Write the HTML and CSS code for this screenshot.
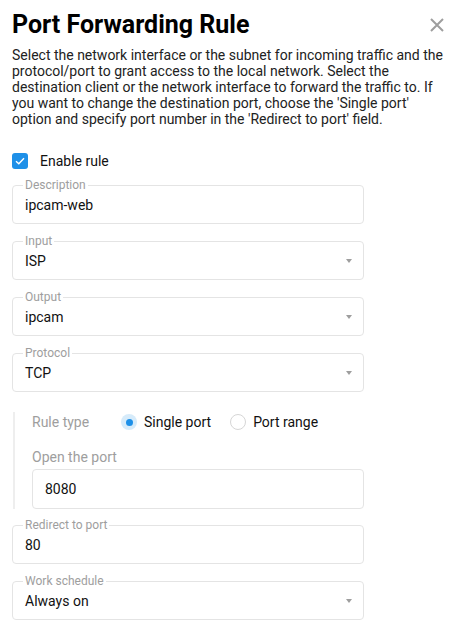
FILE: index.html
```html
<!DOCTYPE html>
<html>
<head>
<meta charset="utf-8">
<link rel="stylesheet" href="styles.css">
</head>
<body>
<div class="dialog">
  <header class="head">
    <h1 class="title">Port Forwarding Rule</h1>
    <button class="close" aria-label="Close">
      <svg width="16" height="16" viewBox="0 0 16 16"><path d="M2 2L14 14M14 2L2 14" stroke="#9e9e9e" stroke-width="2" fill="none"/></svg>
    </button>
  </header>
  <p class="intro">Select the network interface or the subnet for incoming traffic and the protocol/port to grant access to the local network. Select the destination client or the network interface to forward the traffic to. If you want to change the destination port, choose the 'Single port' option and specify port number in the 'Redirect to port' field.</p>

  <label class="check">
    <span class="box"><svg width="10" height="8" viewBox="0 0 10 8"><path d="M1 4.2L3.8 6.8L9 1.2" stroke="#fff" stroke-width="1.4" fill="none"/></svg></span>
    <span>Enable rule</span>
  </label>

  <div class="form">
    <fieldset class="field">
      <legend>Description</legend>
      <div class="row"><span class="val">ipcam-web</span></div>
    </fieldset>
    <fieldset class="field">
      <legend>Input</legend>
      <div class="row"><span class="val">ISP</span><span class="arrow"></span></div>
    </fieldset>
    <fieldset class="field">
      <legend>Output</legend>
      <div class="row"><span class="val">ipcam</span><span class="arrow"></span></div>
    </fieldset>
    <fieldset class="field">
      <legend>Protocol</legend>
      <div class="row"><span class="val">TCP</span><span class="arrow"></span></div>
    </fieldset>

    <section class="group">
      <div class="ruletype">
        <span class="glabel">Rule type</span>
        <span class="radio on"><span class="dot"></span></span>
        <span class="rtext">Single port</span>
        <span class="radio"></span>
        <span class="rtext">Port range</span>
      </div>
      <div class="glabel open">Open the port</div>
      <div class="plain">8080</div>
    </section>

    <fieldset class="field">
      <legend>Redirect to port</legend>
      <div class="row"><span class="val">80</span></div>
    </fieldset>
    <fieldset class="field">
      <legend>Work schedule</legend>
      <div class="row"><span class="val">Always on</span><span class="arrow"></span></div>
    </fieldset>
  </div>
</div>
</body>
</html>
```

FILE: styles.css
```css
* { box-sizing: border-box; }
html, body { margin: 0; padding: 0; background: #fff; }
body {
  font-family: Roboto, "Liberation Sans", sans-serif;
  color: #212121;
}
.dialog { padding: 8px 12px 0 12px; width: 459px; }
.head { display: flex; align-items: center; justify-content: space-between; }
.title {
  margin: 0;
  font-size: 25px;
  line-height: 34px;
  font-weight: 700;
  color: #000;
}
.close {
  border: 0; background: none; padding: 0; margin-right: 2px;
  width: 16px; height: 16px; display: flex;
}
.intro {
  margin: 5px 0 0 0;
  font-size: 14px;
  line-height: 16px;
  color: #222;
}
.check {
  display: flex; align-items: center; gap: 12px;
  margin-top: 25px;
  font-size: 14px; line-height: 18px; color: #111;
}
.check .box {
  width: 16px; height: 16px; border-radius: 3px;
  background: #1e90e8;
  display: flex; align-items: center; justify-content: center;
}
.form { width: 352px; margin-top: 8px; }
.field {
  margin: 10px 0 0 0;
  padding: 0 11px 8px 12px;
  border: 1px solid #e4e4e4;
  border-radius: 4px;
  min-width: 0;
}
.field:first-child { margin-top: 0; }
.field legend {
  font-size: 12px;
  line-height: 14px;
  color: #9e9e9e;
  padding: 0 2px;
  margin-left: -2px;
}
.row {
  display: flex; align-items: center; justify-content: space-between;
  height: 23px; padding-top: 3px;
}
.val { font-size: 14px; color: #111; }
.arrow {
  width: 0; height: 0;
  border-left: 3px solid transparent;
  border-right: 3px solid transparent;
  border-top: 4px solid #9e9e9e;
}
.group {
  margin-top: 20px;
  border-left: 2px solid #eeeeee;
  padding-left: 17px;
  margin-left: 1px;
}
.ruletype { display: flex; align-items: center; height: 20px; font-size: 14px; }
.glabel { color: #9e9e9e; font-size: 14px; }
.ruletype .glabel { width: 89px; }
.radio {
  width: 16px; height: 16px; border-radius: 50%;
  border: 1px solid #d6d6d6; background: #fff;
  display: flex; align-items: center; justify-content: center;
}
.radio.on { border: 0; background: #d6ebfa; }
.radio .dot { width: 7px; height: 7px; border-radius: 50%; background: #1e90e8; }
.rtext { margin-left: 7px; margin-right: 19px; color: #111; }
.open { margin-top: 15px; line-height: 20px; }
.plain {
  margin-top: 2px;
  height: 40px;
  border: 1px solid #e4e4e4; border-radius: 4px;
  padding: 0 12px;
  display: flex; align-items: center;
  font-size: 14px; color: #111;
}
.group + .field { margin-top: 9px; }
```
